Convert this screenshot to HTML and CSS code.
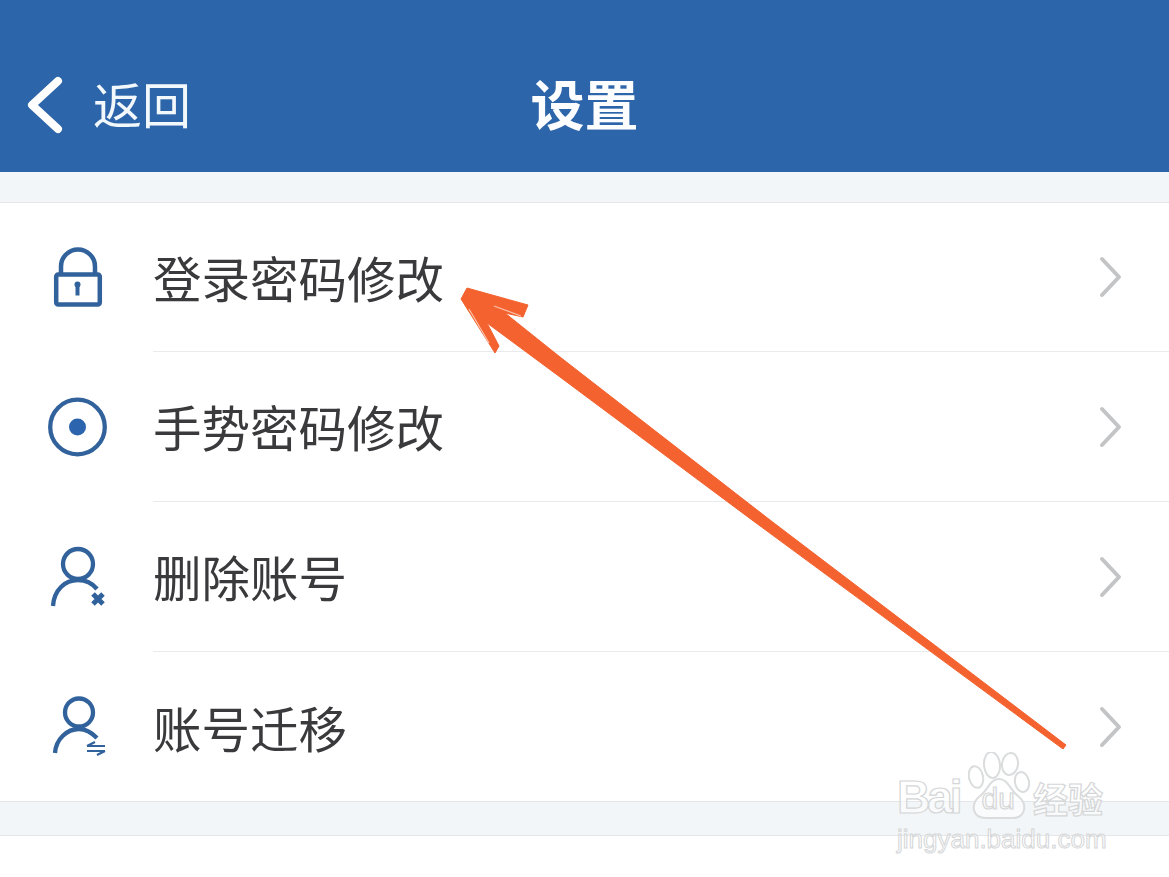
FILE: index.html
```html
<!DOCTYPE html>
<html lang="zh-CN">
<head>
<meta charset="utf-8">
<title>设置</title>
<link rel="stylesheet" href="styles.css">
</head>
<body>
<div class="page">
  <header class="topbar">
    <div class="back">
      <svg class="back-icon" width="40" height="60" viewBox="0 0 40 60"><path d="M34 7 L8 31 L34 55" /></svg>
      <span class="back-text">返回</span>
    </div>
    <h1 class="title">设置</h1>
  </header>
  <div class="gap-top"></div>
  <ul class="list">
    <li class="row">
      <span class="icon-cell">
        <svg class="icon" width="60" height="66" viewBox="0 0 60 66">
          <path d="M14 29 V21.500 A17 17 0 0 1 48 21.500 V29" />
          <rect x="9.200" y="29.500" width="43.600" height="30" rx="2" />
          <circle class="solid" cx="30.500" cy="39.500" r="3" />
          <path class="thin" d="M30.500 40 V50.500" />
        </svg>
      </span>
      <span class="row-body"><span class="label">登录密码修改</span><svg class="chev" width="26" height="42" viewBox="0 0 26 42"><path d="M5 3 L22 21 L5 39"/></svg></span>
    </li>
    <li class="row">
      <span class="icon-cell">
        <svg class="icon" width="60" height="60" viewBox="0 0 60 60">
          <circle class="ring" cx="30.500" cy="30" r="27.300" />
          <circle class="dot" cx="30.500" cy="30" r="8.500" />
        </svg>
      </span>
      <span class="row-body"><span class="label">手势密码修改</span><svg class="chev" width="26" height="42" viewBox="0 0 26 42"><path d="M5 3 L22 21 L5 39"/></svg></span>
    </li>
    <li class="row">
      <span class="icon-cell">
        <svg class="icon" width="60" height="62" viewBox="0 0 60 62">
          <circle class="ring" cx="31" cy="18" r="15" />
          <path class="ring" d="M6 60 C7 44 18 34 31 34 C38 34 45 37 50 43" />
          <path class="cross" d="M46 48 L56 58 M56 48 L46 58" />
        </svg>
      </span>
      <span class="row-body"><span class="label">删除账号</span><svg class="chev" width="26" height="42" viewBox="0 0 26 42"><path d="M5 3 L22 21 L5 39"/></svg></span>
    </li>
    <li class="row">
      <span class="icon-cell">
        <svg class="icon" width="60" height="62" viewBox="0 0 60 62">
          <circle class="ring" cx="32" cy="16.500" r="14" />
          <path class="ring" d="M8 57 C9 43 20 33 32 33 C39 33 45 37 50 42" />
          <path class="thin2" d="M40 50 H58 M48 46 L40 50 M40 55 H58 M50 59 L58 55" />
        </svg>
      </span>
      <span class="row-body row-last"><span class="label">账号迁移</span><svg class="chev" width="26" height="42" viewBox="0 0 26 42"><path d="M5 3 L22 21 L5 39"/></svg></span>
    </li>
  </ul>
  <div class="gap-bottom"></div>

  <svg class="arrow" width="1169" height="877" viewBox="0 0 1169 877">
    <polygon class="arrow-fill" points="467,288 528,305 523,317 505,313 560,357 770,520 1066,745 1063,749 752,520 560,377 487,323 499,346 495,353 461,299"/>
    <path class="arrow-glint" d="M469 309 L489 343 M494 306 L521 316"/>
  </svg>

  <div class="mark">
    <svg class="paw" width="64" height="68" viewBox="0 0 64 68">
      <ellipse cx="8" cy="25" rx="7" ry="11" transform="rotate(-12 8 25)"/>
      <ellipse cx="24" cy="13" rx="8" ry="13" transform="rotate(-5 24 13)"/>
      <ellipse cx="42" cy="12" rx="8" ry="11" transform="rotate(8 42 12)"/>
      <ellipse cx="54" cy="30" rx="7" ry="10" transform="rotate(-12 54 30)"/>
      <path d="M31 27 C40 27 42 38 50 44 C60 52 58 66 44 66 H18 C4 66 2 52 12 44 C20 38 22 27 31 27 Z"/>
    </svg>
    <div class="mark-top"><span class="mark-bai">Bai</span><span class="mark-du">du</span><span class="mark-cn">经验</span></div>
    <div class="mark-url">jingyan.baidu.com</div>
  </div>
</div>
</body>
</html>
```
FILE: styles.css
```css
html, body {
  margin: 0;
  padding: 0;
  background: #fff;
}
.page {
  position: relative;
  width: 1169px;
  height: 877px;
  overflow: hidden;
  font-family: "Noto Sans CJK SC", "Noto Sans", sans-serif;
  background: #fff;
}
.topbar {
  position: relative;
  height: 172px;
  box-sizing: border-box;
  padding-top: 34px;
  background: #2c65a9;
  color: #fff;
  display: flex;
  align-items: center;
  justify-content: center;
}
.back {
  position: absolute;
  left: 24px;
  top: 74px;
  display: flex;
  align-items: center;
  gap: 29px;
  height: 60px;
}
.back-icon path {
  fill: none;
  stroke: #fff;
  stroke-width: 8;
  stroke-linecap: round;
  stroke-linejoin: round;
}
.back-text {
  font-size: 49px;
  line-height: 60px;
  font-weight: 400;
  color: #f2f8fc;
  margin-top: -3px;
}
.title {
  margin: 0;
  font-size: 54px;
  line-height: 68px;
  font-weight: 700;
  color: #fbfdfe;
}
.gap-top {
  height: 30px;
  background: #f3f6f8;
  border-bottom: 1px solid #e4e7ea;
}
.list {
  list-style: none;
  margin: 0;
  padding: 0;
}
.row {
  display: flex;
  height: 150px;
}
.row:first-child {
  height: 149px;
}
.icon-cell {
  width: 153px;
  flex: none;
  display: flex;
  align-items: center;
  padding-left: 47px;
  box-sizing: border-box;
}
.icon {
  display: block;
  fill: none;
  stroke: #31629b;
  stroke-width: 4.500;
  stroke-linejoin: round;
}
.icon .solid { fill: #31629b; stroke: none; }
.icon .thin { stroke-width: 4; }
.icon .ring { stroke-width: 4.300; }
.icon .dot { fill: #2c65ad; stroke: none; }
.icon .cross { stroke-width: 5; }
.icon .thin2 { stroke-width: 2.200; }
.row-body {
  flex: 1;
  display: flex;
  align-items: center;
  justify-content: space-between;
  border-bottom: 1px solid #e8eaec;
  padding-right: 46px;
  box-sizing: border-box;
}
.row-last {
  border-bottom: none;
}
.label {
  font-size: 48.500px;
  line-height: 64px;
  color: #3a3a3c;
  margin-bottom: 1px;
  font-weight: 400;
}
.chev path {
  fill: none;
  stroke: #c3c4c6;
  stroke-width: 4;
  stroke-linecap: round;
  stroke-linejoin: round;
}
.gap-bottom {
  height: 35px;
  box-sizing: border-box;
  background: #f3f6f8;
  border-top: 1px solid #e4e7ea;
  border-bottom: 1px solid #e4e7ea;
  margin-top: -1px;
}
.arrow {
  position: absolute;
  left: 0;
  top: 0;
  pointer-events: none;
}
.arrow-fill {
  fill: #f4622f;
  stroke: #f4622f;
  stroke-width: 1;
  stroke-linejoin: round;
}
.arrow-glint {
  fill: none;
  stroke: #fbc3ab;
  stroke-width: 1.200;
}
.mark {
  position: absolute;
  left: 897px;
  top: 752px;
  width: 215px;
  height: 105px;
  color: rgba(255, 255, 255, 0.55);
  font-family: "Liberation Sans", "Noto Sans CJK SC", sans-serif;
}
.paw {
  position: absolute;
  left: 71px;
  top: 0;
  fill: rgba(255, 255, 255, 0.55);
  stroke: #dadcdd;
  stroke-width: 2;
}
.mark-top {
  position: absolute;
  left: 0;
  top: 18px;
  display: flex;
  align-items: baseline;
  white-space: nowrap;
  -webkit-text-stroke: 1.200px #d4d6d7;
}
.mark-bai {
  font-size: 46px;
  line-height: 54px;
  font-weight: 700;
  letter-spacing: -3px;
}
.mark-du {
  font-size: 30px;
  line-height: 54px;
  margin-left: 22px;
  font-weight: 400;
  transform: translateY(-4px);
}
.mark-cn {
  font-family: "Noto Sans CJK SC", sans-serif;
  font-size: 35px;
  line-height: 54px;
  font-weight: 700;
  margin-left: 18px;
}
.mark-url {
  position: absolute;
  left: 0;
  top: 73px;
  font-size: 26px;
  line-height: 28px;
  white-space: nowrap;
  -webkit-text-stroke: 1px #d4d6d7;
}
```
